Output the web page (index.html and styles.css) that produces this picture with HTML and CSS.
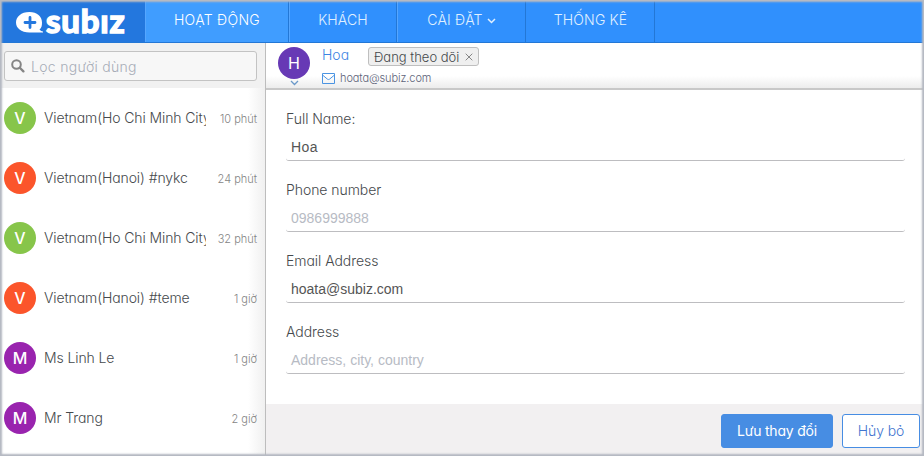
FILE: index.html
```
<!DOCTYPE html>
<html lang="vi">
<head>
<meta charset="utf-8">
<title>Subiz</title>
<link rel="stylesheet" href="styles.css">
</head>
<body>
<div class="app">
  <header class="topbar">
    <div class="brand">
      <svg class="brand-mark" width="27" height="21" viewBox="0 0 27 21"><path fill="#fff" d="M13.500 0C21 0 26 4.500 26 10.500C26 14 25.500 16 23.500 17.500Q25 19.500 27 19.500V20.500H13.500C5 20.500 0 16 0 10.500S5 0 13.500 0Z"/><path d="M14 5.500v10M9 10.500h10" stroke="#2377de" stroke-width="2.800" stroke-linecap="round"/></svg>
      <span class="brand-name">subız</span>
    </div>
    <nav class="nav">
      <a class="tab tab-activity active"><span>HOẠT ĐỘNG</span></a>
      <a class="tab tab-visitors"><span>KHÁCH</span></a>
      <a class="tab tab-settings"><span>CÀI ĐẶT</span><svg width="9" height="6" viewBox="0 0 9 6"><path d="M1 1l3.500 3.500L8 1" fill="none" stroke="currentColor" stroke-width="1.500"/></svg></a>
      <a class="tab tab-stats"><span>THỐNG KÊ</span></a>
    </nav>
  </header>
  <div class="body">
    <aside class="sidebar">
      <div class="search-wrap"><div class="search">
        <svg width="14" height="14" viewBox="0 0 14 14"><circle cx="5.500" cy="5.500" r="4.300" fill="none" stroke="#858585" stroke-width="2"/><path d="M8.800 8.800l3.600 3.600" stroke="#858585" stroke-width="2.300" stroke-linecap="round"/></svg>
        <span>Lọc người dùng</span>
      </div></div>
      <ul class="users">
        <li><b class="avatar green">V</b><span class="name">Vietnam(Ho Chi Minh City</span><time>10 phút</time></li>
        <li><b class="avatar orange">V</b><span class="name">Vietnam(Hanoi) #nykc</span><time>24 phút</time></li>
        <li><b class="avatar green">V</b><span class="name">Vietnam(Ho Chi Minh City</span><time>32 phút</time></li>
        <li><b class="avatar orange">V</b><span class="name">Vietnam(Hanoi) #teme</span><time>1 giờ</time></li>
        <li><b class="avatar purple">M</b><span class="name">Ms Linh Le</span><time>1 giờ</time></li>
        <li><b class="avatar purple">M</b><span class="name">Mr Trang</span><time>2 giờ</time></li>
      </ul>
    </aside>
    <main class="panel">
      <section class="contact">
        <div class="contact-avatar"><b class="avatar violet">H</b><svg width="9" height="6" viewBox="0 0 9 6"><path d="M1 1l3.500 3.500L8 1" fill="none" stroke="#6b99c9" stroke-width="1.300"/></svg></div>
        <div class="contact-info">
          <div class="contact-line"><span class="contact-name">Hoa</span><span class="tag"><span>Đang theo dõi</span><svg width="8" height="8" viewBox="0 0 8 8"><path d="M.7.7l6.600 6.600M7.300.7L.7 7.300" stroke="#858585" stroke-width="1"/></svg></span></div>
          <div class="mail"><svg width="13" height="11" viewBox="0 0 13 11"><path d="M.5.5h12v10H.5zM.5 2l5 4.200q1 .7 2 0l5-4.200" fill="none" stroke="#4b94e2"/></svg><span>hoata@subiz.com</span></div>
        </div>
      </section>
      <form class="form">
        <label><span class="label">Full Name:</span><span class="field hoa">Hoa</span></label>
        <label><span class="label">Phone number</span><span class="field placeholder">0986999888</span></label>
        <label><span class="label">Email Address</span><span class="field">hoata@subiz.com</span></label>
        <label><span class="label">Address</span><span class="field placeholder">Address, city, country</span></label>
      </form>
      <footer class="actions"><button class="save">Lưu thay đổi</button><button class="cancel">Hủy bỏ</button></footer>
    </main>
  </div>
  <div class="frame"></div>
</div>
</body>
</html>
```
FILE: styles.css
```
* { box-sizing: border-box; }
body { margin: 0; }
.app {
  position: relative;
  width: 924px;
  height: 456px;
  overflow: hidden;
  display: flex;
  flex-direction: column;
  background: #fff;
  color: #45494c;
  font-family: Inter, "Noto Sans", sans-serif;
  font-feature-settings: "cv11";
  font-size: 14px;
  font-weight: 300;
}
svg { display: block; flex: none; }
.topbar { height: 43px; display: flex; background: #3090fd; border-bottom: 1px solid #2377d5; flex: none; }
.brand { width: 145px; padding: 0 0 0 16px; display: flex; background: #2377de; }
.brand-mark { margin-top: 12px; }
.brand-name { margin-left: 3px; font: 700 33px/40px Lato, sans-serif; color: #fff; letter-spacing: .8px; -webkit-text-stroke: 1.600px #fff; stroke-linejoin: round; }
.nav { display: flex; }
.tab { display: flex; justify-content: center; align-items: center; padding-bottom: 3px; color: #e0f0ff; border-right: 1px solid #2377d5; border-left: 1px solid #55a6ff; font-size: 14px; white-space: nowrap; letter-spacing: .15px; }
.tab:last-child { border-left-color: #3090fd; }
.tab svg { margin-left: 4px; margin-top: 3px; }
.tab-activity { width: 144px; background: #409dff; color: #fff; letter-spacing: .3px; }
.tab-visitors { width: 108px; }
.tab-settings { width: 129px; }
.tab-stats { width: 129px; }
.body { flex: 1; display: flex; min-height: 0; }
.sidebar { width: 266px; border-right: 1px solid #bdbdbd; background: linear-gradient(to right, #fff 248px, #f0f0f0 265px); }
.search-wrap { height: 45px; padding: 8px 8px 0 4px; background: #f1f1f1; }
.search { height: 30px; border: 1px solid #c3c3c3; border-radius: 3px; background: #f7f7f7; display: flex; align-items: center; padding-left: 6px; gap: 6px; color: #a7adb7; letter-spacing: .3px; }
.users { list-style: none; margin: 0; padding: 0; }
.users li { height: 60px; padding: 0 8px 0 4px; display: flex; align-items: center; }
.avatar { width: 32px; height: 32px; border-radius: 50%; display: flex; align-items: center; justify-content: center; color: #fff; font-size: 16px; font-weight: 500; flex: none; }
.green { background: #87c54a; }
.orange { background: #fb552b; }
.purple { background: #9924ae; }
.violet { background: #6739b5; font-weight: 400; }
.name { width: 162px; margin-left: 8px; overflow: hidden; white-space: nowrap; line-height: 20px; letter-spacing: -.1px; }
.users time { margin-left: auto; color: #848484; font-size: 11px; white-space: nowrap; padding-top: 2px; }
.panel { flex: 1; display: flex; flex-direction: column; }
.contact { height: 47px; padding: 4px 0 0 12px; display: flex; background: linear-gradient(#fff 33px, #ececec); border-bottom: 2px solid #c8c8c8; flex: none; }
.contact-avatar { display: flex; flex-direction: column; align-items: center; gap: 1px; }
.contact-info { margin-left: 12px; }
.contact-line { display: flex; height: 19px; }
.contact-name { width: 46px; line-height: 16px; color: #3d85e3; }
.tag { height: 19px; padding: 0 5px; border: 1px solid #bfbfbf; border-radius: 3px; background: #efefef; display: flex; align-items: center; justify-content: space-between; width: 111px; white-space: nowrap; font-size: 13px; }
.mail { display: flex; align-items: center; gap: 5px; margin-top: 5px; font-size: 11px; line-height: 14px; color: #5d6379; letter-spacing: -.1px; }
.form { height: 314px; flex: none; padding: 19px 19px 0 20px; }
.form label { display: block; height: 71px; }
.label { display: block; height: 21px; line-height: 20px; letter-spacing: -.05px; }
.field { display: block; height: 31px; border-bottom: 1px solid #bdbdc0; border-radius: 3px; padding: 0 5px; font-family: "Liberation Sans", Arial, sans-serif; font-size: 14px; font-weight: 400; line-height: 34px; color: #555; }
.hoa { letter-spacing: .4px; }
.placeholder { color: #b7bbc4; }
.actions { flex: 1; display: flex; justify-content: flex-end; align-items: flex-start; gap: 9px; padding: 10px 4px 0; background: #f2f0f1; }
button { height: 34px; padding: 0 0 1px; border: 1px solid #478de3; border-radius: 3px; font: inherit; font-feature-settings: "cv11"; white-space: nowrap; letter-spacing: -.1px; }
.save { width: 112px; background: #478de3; color: #fff; font-weight: 400; letter-spacing: -.2px; }
.cancel { width: 78px; background: #fff; color: #4275cf; }
.frame { position: absolute; inset: 0; pointer-events: none; border: 1px solid #b6bac3; box-shadow: inset 0 0 2px 1px #b4b8c1; }
```
